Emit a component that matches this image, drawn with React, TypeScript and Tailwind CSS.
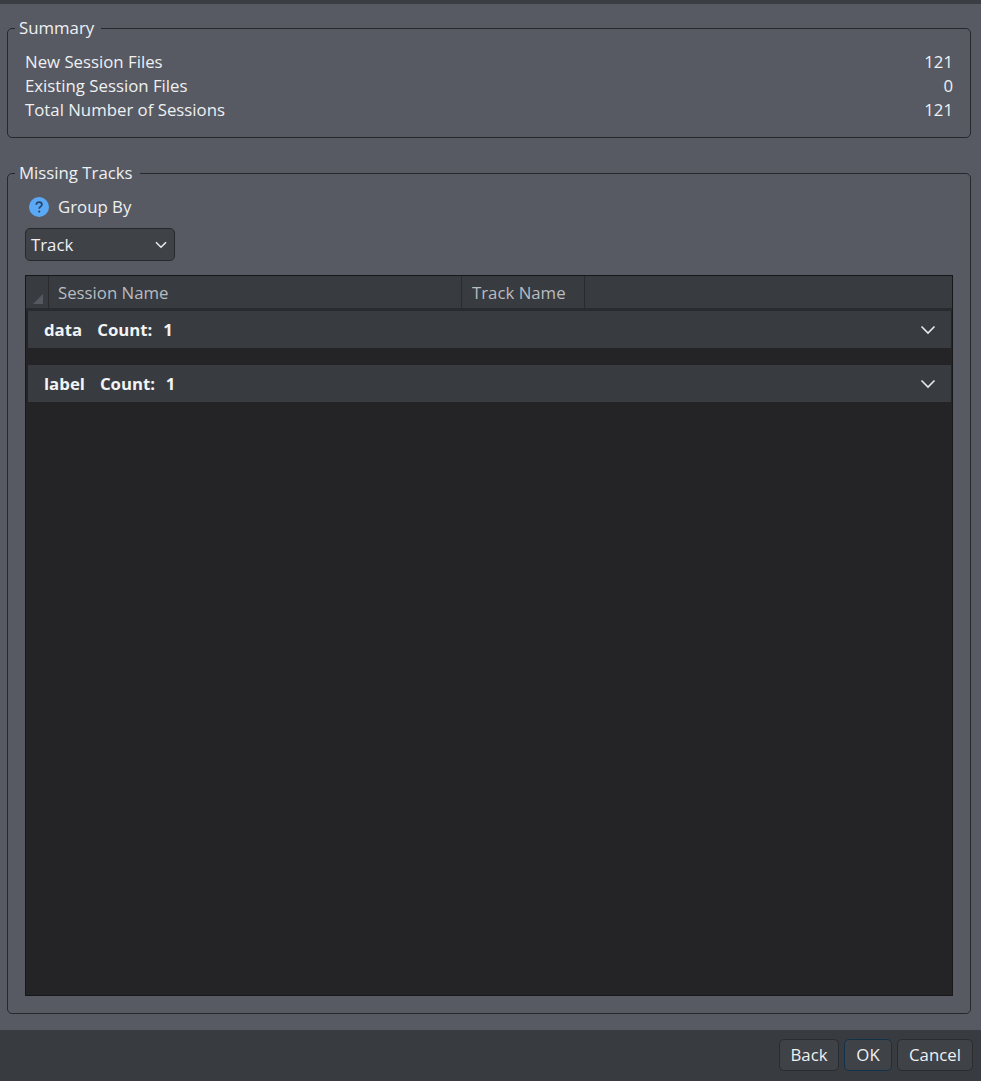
const rowText = "text-[#eef0f2]";

function SummaryRow({ label, value }: { label: string; value: number }) {
  return (
    <div className={`flex h-6 items-center justify-between ${rowText}`}>
      <span>{label}</span>
      <span>{value}</span>
    </div>
  );
}

function GroupRow({ name, count }: { name: string; count: number }) {
  return (
    <div className="flex h-[37px] items-center justify-between bg-[#383b40] pl-[16px] pr-[15px] font-bold text-[#f2f3f4]">
      <div className="flex gap-[15px]">
        <span>{name}</span>
        <span className="whitespace-pre">
          Count:  <span className="ml-[2px]">{count}</span>
        </span>
      </div>
      <svg viewBox="0 0 16 10" className="h-[10px] w-[16px]" fill="none" aria-hidden="true">
        <path d="M1.5 1.5 8 8l6.5-6.5" stroke="#e8e9ea" strokeWidth="1.6" />
      </svg>
    </div>
  );
}

function FooterButton({ label, width, primary }: { label: string; width: string; primary?: boolean }) {
  return (
    <button
      className={`h-[32px] rounded-[5px] border bg-[#3f4247] ${width} text-[#eef0f2] ${
        primary ? "border-[#12324c]" : "border-[#2a2c30]"
      }`}
    >
      {label}
    </button>
  );
}

export default function App() {
  return (
    <div className="flex h-[1081px] flex-col overflow-hidden bg-[#575a62] font-['Open_Sans',sans-serif] text-[16.8px] leading-6">
      <div className="h-[4px] bg-[#3a3d42]" />

      <div className="flex flex-1 flex-col gap-[23px] pl-[7px] pr-[10px] pt-[12px]">
        <fieldset className="h-[122px] rounded-[5px] border border-[#26282b] pl-[17px] pr-[17px]">
          <legend className={`-ml-[10px] pl-[4px] pr-[7px] ${rowText}`}>Summary</legend>
          <div className="mt-[9.5px]">
            <SummaryRow label="New Session Files" value={121} />
            <SummaryRow label="Existing Session Files" value={0} />
            <SummaryRow label="Total Number of Sessions" value={121} />
          </div>
        </fieldset>

        <fieldset className="h-[853px] rounded-[5px] border border-[#26282b] px-[17px]">
          <legend className={`-ml-[10px] pl-[4px] pr-[7px] ${rowText}`}>Missing Tracks</legend>
          <div className="mt-[10px] flex h-6 items-center gap-[9px] pl-[4px] text-[#eef0f2]">
            <svg viewBox="0 0 20 20" className="h-[20px] w-[20px]" aria-hidden="true">
              <circle cx="10" cy="10" r="10" fill="#5ba9f5" />
              <path d="M7.2 7.8c0-1.7 1.2-2.7 2.9-2.7s2.8 1 2.8 2.4c0 2.2-2.7 2.2-2.7 4.3" fill="none" stroke="#27456b" strokeWidth="1.7" />
              <circle cx="10.2" cy="14.6" r="1.1" fill="#27456b" />
            </svg>
            <span>Group By</span>
          </div>
          <div className="mt-[9px] flex h-[33px] w-[150px] items-center justify-between rounded-[5px] border border-[#26282b] bg-[#3f4247] pl-[5px] pr-[7px] text-[#eef0f2]">
            <span>Track</span>
            <svg viewBox="0 0 12 8" className="h-[8px] w-[12px]" fill="none" aria-hidden="true">
              <path d="M1 1.2 6 6.2l5-5" stroke="#e8e9ea" strokeWidth="1.6" />
            </svg>
          </div>

          <div className="mt-[14px] flex h-[721px] flex-col border border-[#17181a] bg-[#242426]">
            <div className="flex h-[35px] border-b-[3px] border-[#292b2e] bg-[#383b40] text-[#b9bcc1]">
              <div className="flex w-[23px] items-end border-r border-[#292b2e] pb-[4px] pl-[7px]">
                <svg viewBox="0 0 10 10" className="h-[10px] w-[10px]" aria-hidden="true">
                  <path d="M10 0v10H0z" fill="#565a60" />
                </svg>
              </div>
              <div className="flex w-[413px] items-center border-r border-[#292b2e] pl-[9px] pt-[1px]">Session Name</div>
              <div className="flex w-[123px] items-center border-r border-[#292b2e] pl-[10px] pt-[1px]">Track Name</div>
              <div className="flex-1" />
            </div>
            <div className="flex flex-col gap-[17px] pl-[2px] pr-[1px]">
              <GroupRow name="data" count={1} />
              <GroupRow name="label" count={1} />
            </div>
          </div>
        </fieldset>
      </div>

      <div className="flex h-[51px] items-start justify-end gap-[5px] bg-[#383b40] pr-[8px] pt-[9px]">
        <FooterButton label="Back" width="w-[60px]" />
        <FooterButton label="OK" width="w-[48px]" primary />
        <FooterButton label="Cancel" width="w-[76px]" />
      </div>
    </div>
  );
}
